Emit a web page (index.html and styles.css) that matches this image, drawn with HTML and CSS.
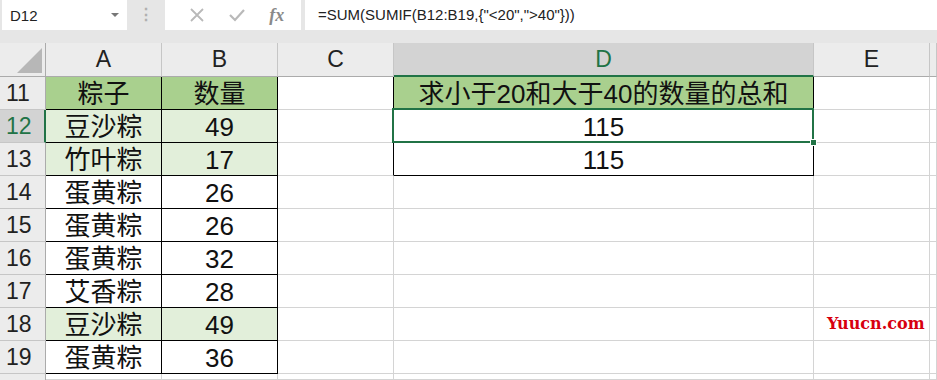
FILE: index.html
```html
<!DOCTYPE html>
<html lang="zh-CN">
<head>
    <meta charset="UTF-8">
    <title>SUMIF</title>
    <link rel="stylesheet" href="styles.css">
</head>
<body>

    <div class="toolbar">
        <div class="namebox">
            <span>D12</span>
            <span class="caret"></span>
        </div>
        <div class="dots">⋮</div>
        <div class="fxbox">
            <svg class="ico" width="18" height="18" viewBox="0 0 18 18"><path d="M3 3 L15 15 M15 3 L3 15" stroke="#b9b9b9" stroke-width="1.8" fill="none"/></svg>
            <svg class="ico" width="20" height="18" viewBox="0 0 20 18"><path d="M3 9 L8 14 L17 4" stroke="#b9b9b9" stroke-width="2.2" fill="none"/></svg>
            <span class="fx">fx</span>
        </div>
        <div class="formula">=SUM(SUMIF(B12:B19,{"&lt;20","&gt;40"}))</div>
    </div>

    <div class="sheet">
        <!-- 列标题 -->
        <div class="corner"><span class="tri"></span></div>
        <div class="ch">A</div>
        <div class="ch">B</div>
        <div class="ch">C</div>
        <div class="ch on">D</div>
        <div class="ch">E</div>
        <div class="ch"></div>

        <div class="rh">11</div>
        <div class="c bk hd">粽子</div>
        <div class="c bk hd">数量</div>
        <div class="c br"></div>
        <div class="c bk hd">求小于20和大于40的数量的总和</div>
        <div class="c"></div>
        <div class="c"></div>

        <div class="rh on">12</div>
        <div class="c bk lg">豆沙粽</div>
        <div class="c bk lg">49</div>
        <div class="c br"></div>
        <div class="c bk sel">115</div>
        <div class="c"></div>
        <div class="c"></div>

        <div class="rh">13</div>
        <div class="c bk lg">竹叶粽</div>
        <div class="c bk lg">17</div>
        <div class="c br"></div>
        <div class="c bk">115</div>
        <div class="c"></div>
        <div class="c"></div>

        <div class="rh">14</div>
        <div class="c bk">蛋黄粽</div>
        <div class="c bk">26</div>
        <div class="c"></div>
        <div class="c"></div>
        <div class="c"></div>
        <div class="c"></div>

        <div class="rh">15</div>
        <div class="c bk">蛋黄粽</div>
        <div class="c bk">26</div>
        <div class="c"></div>
        <div class="c"></div>
        <div class="c"></div>
        <div class="c"></div>

        <div class="rh">16</div>
        <div class="c bk">蛋黄粽</div>
        <div class="c bk">32</div>
        <div class="c"></div>
        <div class="c"></div>
        <div class="c"></div>
        <div class="c"></div>

        <div class="rh">17</div>
        <div class="c bk">艾香粽</div>
        <div class="c bk">28</div>
        <div class="c"></div>
        <div class="c"></div>
        <div class="c"></div>
        <div class="c"></div>

        <div class="rh">18</div>
        <div class="c bk lg">豆沙粽</div>
        <div class="c bk lg">49</div>
        <div class="c"></div>
        <div class="c"></div>
        <div class="c"></div>
        <div class="c"></div>

        <div class="rh">19</div>
        <div class="c bk">蛋黄粽</div>
        <div class="c bk">36</div>
        <div class="c"></div>
        <div class="c"></div>
        <div class="c"></div>
        <div class="c"></div>

        <!-- 第20行只露出一点 -->
        <div class="rh last"></div>
        <div class="c"></div>
        <div class="c"></div>
        <div class="c"></div>
        <div class="c"></div>
        <div class="c"></div>
        <div class="c"></div>

        <div class="mark">Yuucn.com</div>
    </div>

</body>
</html>
```

FILE: styles.css
```css
body {
    margin: 0;
    background-color: #e6e6e6;
    font-family: "Liberation Sans", "Noto Sans CJK SC", sans-serif;
    overflow: hidden;
}

/* 编辑栏 */
.toolbar {
    display: flex;
    align-items: stretch;
    height: 30px;
    margin-bottom: 13px;
}

.namebox {
    width: 125px;
    margin-left: 2px;
    background-color: #fff;
    display: flex;
    align-items: center;
    justify-content: space-between;
    padding: 0 8px 0 8px;
    box-sizing: border-box;
    font-size: 15px;
    color: #222;
}

.caret {
    width: 0;
    height: 0;
    border-left: 4px solid transparent;
    border-right: 4px solid transparent;
    border-top: 4px solid #777;
}

.dots {
    width: 38px;
    text-align: center;
    line-height: 30px;
    color: #b0b0b0;
    font-size: 16px;
    font-weight: bold;
}

.fxbox {
    width: 136px;
    background-color: #fff;
    display: flex;
    align-items: center;
    justify-content: space-around;
    padding: 0 6px 0 12px;
    box-sizing: border-box;
}

.fx {
    font-family: "Liberation Serif", serif;
    font-style: italic;
    font-weight: bold;
    font-size: 18px;
    color: #8a8a8a;
}

.formula {
    flex: 1;
    margin-left: 4px;
    background-color: #fff;
    padding-left: 13px;
    line-height: 30px;
    font-size: 15px;
    color: #222;
}

/* 表格 */
.sheet {
    position: relative;
    display: grid;
    grid-template-columns: 46px 116px 116px 116px 420px 116px 1fr;
    grid-template-rows: 34px repeat(9, 33px) 6px;
    background-color: #fff;
}

.corner {
    background-color: #ececec;
    border-right: 1px solid #ababab;
    border-bottom: 1px solid #ababab;
    position: relative;
}

.tri {
    position: absolute;
    right: 3px;
    bottom: 3px;
    width: 0;
    height: 0;
    border-left: 25px solid transparent;
    border-bottom: 25px solid #b7b7b7;
}

.ch {
    background-color: #ececec;
    border-right: 1px solid #c6c6c6;
    border-bottom: 1px solid #ababab;
    display: flex;
    align-items: center;
    justify-content: center;
    font-size: 23px;
    line-height: 1;
    color: #222;
}

.ch.on {
    background-color: #d3d3d3;
    color: #217346;
    border-bottom: 2px solid #217346;
}

.rh {
    background-color: #ececec;
    border-right: 1px solid #ababab;
    border-bottom: 1px solid #c6c6c6;
    display: flex;
    align-items: center;
    padding-left: 6px;
    font-size: 23px;
    line-height: 1;
    color: #222;
}

.rh.on {
    background-color: #d3d3d3;
    color: #217346;
    border-right: 2px solid #217346;
}

.rh.last {
    border-bottom: none;
}

.c {
    border-right: 1px solid #d4d4d4;
    border-bottom: 1px solid #d4d4d4;
    display: flex;
    align-items: center;
    justify-content: center;
    padding-top: 2px;
    font-family: "Liberation Sans", "Noto Sans CJK SC", sans-serif;
    font-size: 26px;
    line-height: 1;
    color: #111;
    white-space: nowrap;
}

.bk {
    border-right-color: #000;
    border-bottom-color: #000;
}

.br {
    border-right-color: #000;
}

.hd {
    background-color: #a9d08e;
}

.lg {
    background-color: #e2efda;
}

.sel {
    position: relative;
}

.sel::before {
    content: '';
    position: absolute;
    left: -2px;
    top: -2px;
    right: -1px;
    bottom: -1px;
    border: 2px solid #217346;
}

.sel::after {
    content: '';
    position: absolute;
    right: -4px;
    bottom: -4px;
    width: 5px;
    height: 5px;
    background-color: #217346;
    border: 1px solid #fff;
}

.mark {
    position: absolute;
    left: 827px;
    top: 271px;
    font-family: "DejaVu Serif", serif;
    font-weight: bold;
    font-size: 16px;
    color: #d7000f;
}
```
